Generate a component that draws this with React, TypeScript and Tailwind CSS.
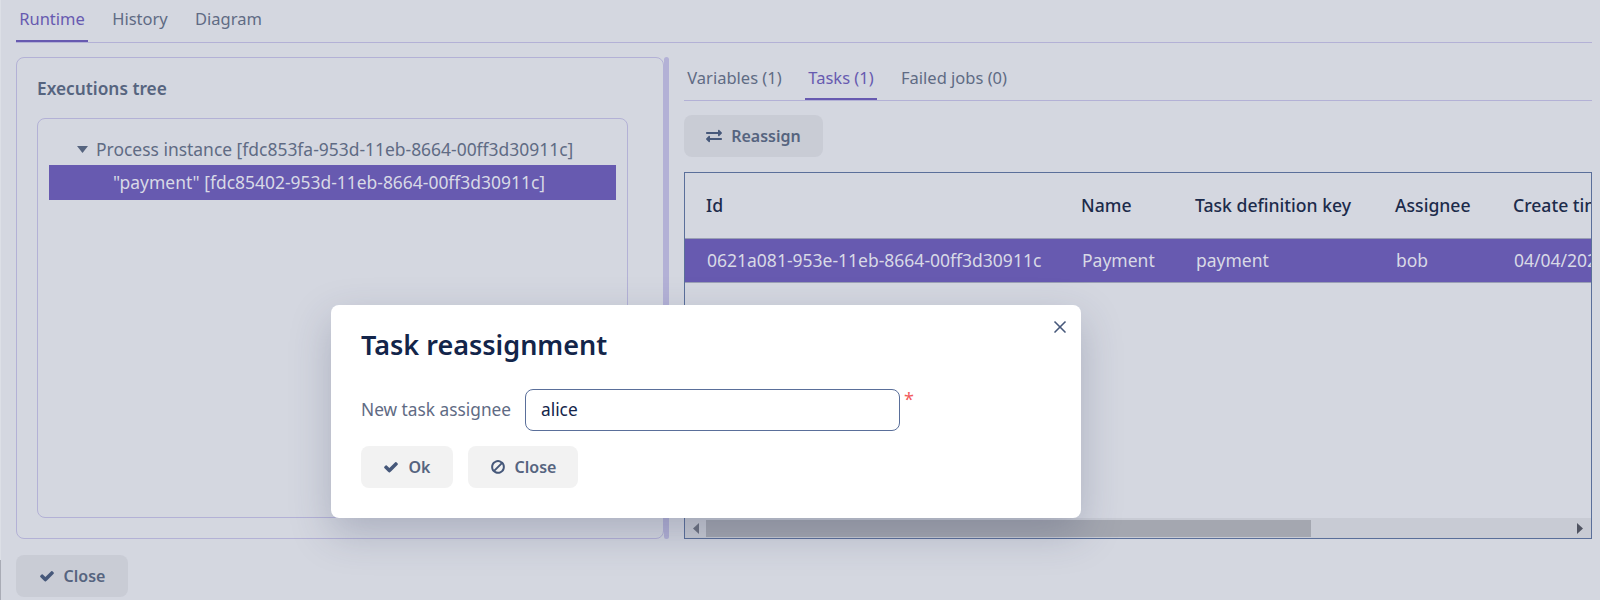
import { FaExchangeAlt } from "react-icons/fa";
import { X } from "lucide-react";

function CheckIcon() {
  return (
    <svg width="16" height="16" viewBox="0 0 1792 1792" fill="#46587a">
      <path d="M1671 566q0 40-28 68l-724 724-136 136q-28 28-68 28t-68-28l-136-136-362-362q-28-28-28-68t28-68l136-136q28-28 68-28t68 28l294 295 656-657q28-28 68-28t68 28l136 136q28 28 28 68z" />
    </svg>
  );
}

function BanIcon() {
  return (
    <svg width="16" height="16" viewBox="0 0 1792 1792" fill="#46587a">
      <path d="M1440 893q0-161-87-295l-754 753q137 89 297 89 111 0 211.5-43.5t173.5-116.5 116-174.5 43-212.5zm-999 299l755-754q-135-91-300-91-148 0-273 73t-198 199-73 274q0 162 89 299zm1223-299q0 157-61 300t-163.5 246-245 164-298.5 61-298.5-61-245-164-163.5-246-61-300 61-299.5 163.5-245.5 245-164 298.5-61 298.5 61 245 164 163.5 245.5 61 299.5z" />
    </svg>
  );
}

function Btn({ icon, label, cls }: { icon: React.ReactNode; label: string; cls: string }) {
  return (
    <button className={`flex h-[42px] items-center justify-center gap-[9px] rounded-[8px] text-[16px] font-semibold text-[#56647f] ${cls}`}>
      {icon}
      <span>{label}</span>
    </button>
  );
}

function Tab({ label, active, cls }: { label: string; active?: boolean; cls: string }) {
  return (
    <div className={`-mb-px flex h-full items-center justify-center whitespace-nowrap border-b-2 text-[16.5px] ${active ? "border-[#675ab0] text-[#675ab0]" : "border-transparent text-[#5f6b84]"} ${cls}`}>
      {label}
    </div>
  );
}

const cols = [
  { w: "w-[375px]", head: "Id", cell: "0621a081-953e-11eb-8664-00ff3d30911c" },
  { w: "w-[114px]", head: "Name", cell: "Payment" },
  { w: "w-[200px]", head: "Task definition key", cell: "payment" },
  { w: "w-[118px]", head: "Assignee", cell: "bob" },
  { w: "w-[100px]", head: "Create time", cell: "04/04/2021 12:30" },
];

export default function App() {
  return (
    <div className="relative h-[600px] w-[1600px] overflow-hidden bg-[#d4d7e0] font-['Noto_Sans',sans-serif]">
      <div className="absolute left-0 top-0 h-[560px] w-px bg-[#dcdfe6]" />
      <div className="absolute bottom-0 left-0 h-[40px] w-px bg-[#a9acb6]" />
      <div className="flex h-full flex-col pl-4 pr-2">
        <div className="flex h-[43px] shrink-0 border-b border-[#b3b1d6]">
          <Tab label="Runtime" active cls="w-[72px] pb-[2px]" />
          <Tab label="History" cls="ml-[14px] w-[76px] pb-[2px]" />
          <Tab label="Diagram" cls="ml-[8px] w-[85px] pb-[2px]" />
        </div>
        <div className="mt-[14px] flex h-[482px] shrink-0">
          <div className="flex w-[648px] shrink-0 flex-col rounded-[8px] border border-[#b3b1d6] pb-[20px] pl-[20px] pr-[35px]">
            <div className="flex h-[60px] shrink-0 items-center pt-[2px] text-[17.3px] font-semibold text-[#56647f]">Executions tree</div>
            <div className="flex-1 rounded-[8px] border border-[#b3b1d6] px-[11px] pt-[12px]">
              <div className="flex h-[34px] items-center pl-[28px] pt-[2px] text-[17.45px] text-[#5f6b84]">
                <svg width="11" height="7" viewBox="0 0 11 7" className="mr-[8px]"><path d="M0 0h11L5.5 7z" fill="#56647f" /></svg>
                <span className="whitespace-nowrap">Process instance [fdc853fa-953d-11eb-8664-00ff3d30911c]</span>
              </div>
              <div className="flex h-[35px] items-center whitespace-nowrap bg-[#675ab0] pl-[64px] text-[17.45px] text-[#d8d9e6]">"payment" [fdc85402-953d-11eb-8664-00ff3d30911c]</div>
            </div>
          </div>
          <div className="w-[5px] shrink-0 rounded-[3px] bg-[#b3b1d6]" />
          <div className="ml-[15px] flex min-w-0 flex-1 flex-col">
            <div className="flex h-[44px] shrink-0 border-b border-[#b3b1d6]">
              <Tab label="Variables (1)" cls="w-[101px] pt-[2px]" />
              <Tab label="Tasks (1)" active cls="ml-[20px] w-[72px] pt-[2px]" />
              <Tab label="Failed jobs (0)" cls="ml-[21px] w-[112px] pt-[2px]" />
            </div>
            <div className="mt-[14px] shrink-0">
              <Btn icon={<FaExchangeAlt size={16} color="#46587a" />} label="Reassign" cls="w-[139px] bg-[#c9ccd5]" />
            </div>
            <div className="mt-[15px] flex min-h-0 flex-1 flex-col overflow-hidden border border-[#5a6f9a]">
              <div className="flex h-[65px] shrink-0 items-center pl-[21px]">
                {cols.map((c) => (
                  <div key={c.head} className={`${c.w} shrink-0 whitespace-nowrap text-[17.6px] font-medium text-[#1c2b4b]`}>{c.head}</div>
                ))}
              </div>
              <div className="flex h-[45px] shrink-0 items-center border-y border-[#9a9fb5] bg-[#675ab0] pl-[22px]">
                {cols.map((c) => (
                  <div key={c.head} className={`${c.w} shrink-0 whitespace-nowrap text-[17.5px] text-[#d8d9e6]`}>{c.cell}</div>
                ))}
              </div>
              <div className="flex-1" />
              <div className="flex h-[20px] shrink-0 items-center bg-[#c8cbd4]">
                <svg width="6" height="11" viewBox="0 0 6 11" className="ml-[8px]"><path d="M6 0v11L0 5.5z" fill="#6d7280" /></svg>
                <div className="ml-[7px] h-[17px] w-[605px] bg-[#a4a7b0]" />
                <div className="flex-1" />
                <svg width="6" height="11" viewBox="0 0 6 11" className="mr-[8px]"><path d="M0 0v11L6 5.5z" fill="#4f5361" /></svg>
              </div>
            </div>
          </div>
        </div>
        <div className="mt-[16px]">
          <Btn icon={<CheckIcon />} label="Close" cls="w-[112px] bg-[#c9ccd5]" />
        </div>
      </div>

      <div className="absolute left-[331px] top-[305px] h-[213px] w-[750px] rounded-[8px] bg-white px-[30px] pt-[20px] shadow-[0_15px_40px_rgba(50,60,95,0.25)]">
        <button className="absolute right-[11px] top-[12px] text-[#46587a]"><X size={20} strokeWidth={2} /></button>
        <div className="text-[27px] font-semibold leading-[40px] text-[#13254a]">Task reassignment</div>
        <div className="mt-[24px] flex h-[42px] items-center">
          <label className="w-[164px] shrink-0 whitespace-nowrap text-[17.3px] text-[#5f6b84]">New task assignee</label>
          <div className="flex h-[42px] w-[375px] items-center rounded-[8px] border border-[#5a6f9a] pl-[15px] text-[17.3px] text-[#13254a]">alice</div>
          <span className="mb-[22px] ml-[4px] text-[18px] leading-none text-[#f25c5c]">*</span>
        </div>
        <div className="mt-[15px] flex gap-[15px]">
          <Btn icon={<CheckIcon />} label="Ok" cls="w-[92px] bg-[#f2f2f2]" />
          <Btn icon={<BanIcon />} label="Close" cls="w-[110px] bg-[#f2f2f2]" />
        </div>
      </div>
    </div>
  );
}
